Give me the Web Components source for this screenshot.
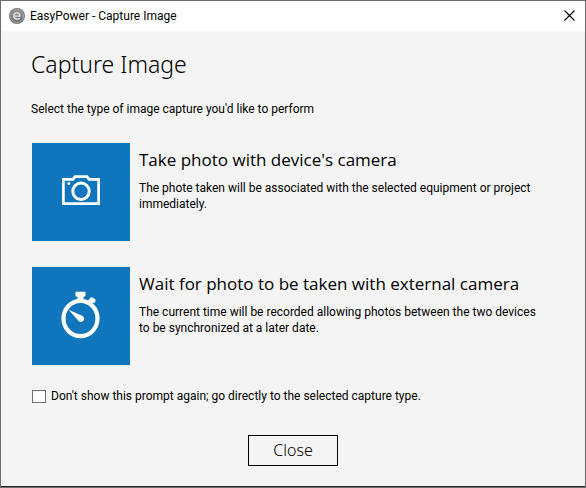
<!DOCTYPE html>
<html lang="en"><head><meta charset="utf-8"><title>EasyPower - Capture Image</title>
<style>
html,body{height:100%;margin:0}
body{font:12px/16px Roboto,"Liberation Sans",sans-serif;color:#000;background:#f4f4f4}
</style></head><body>
<capture-dialog></capture-dialog>
<script>
const define=(name,html)=>customElements.define(name,class extends HTMLElement{
  constructor(){super();const t=document.createElement('template');t.innerHTML=html;
    this.attachShadow({mode:'open'}).append(t.content.cloneNode(true));}
});
define('title-bar',`<style>
:host{display:flex;align-items:center;height:30px;background:#fff;padding:0 10px 0 8px;gap:5px}
.t{flex:1;white-space:nowrap}
svg{display:block}
button{border:0;background:none;padding:0 0 2px;margin:0}
</style>
<svg width="16" height="16" viewBox="0 0 16 16" aria-hidden="true">
<defs><linearGradient id="g" x1="0" y1="0" x2="0" y2="1"><stop offset="0" stop-color="#929497"/><stop offset=".5" stop-color="#7c7e81"/><stop offset="1" stop-color="#68696c"/></linearGradient></defs>
<circle cx="8" cy="8" r="8" fill="#737578"/><circle cx="8" cy="8" r="6.5" fill="url(#g)" stroke="#a6a8aa" stroke-width="1"/>
<path d="M5.4 8.1H10.9C10.9 5.9 9.8 4.9 8 4.9C6 4.9 4.8 6.2 4.8 8.1C4.8 10.1 6 11.2 8 11.2C9.2 11.2 10.1 11 10.9 10.3" fill="none" stroke="#e9e9ea" stroke-width="1.4"/></svg>
<span class="t"><slot></slot></span>
<button type="button" aria-label="Close window"><svg width="11" height="11" viewBox="0 0 11 11"><path d="M.5 .5L10.5 10.5M10.5 .5L.5 10.5" stroke="#000" stroke-width="1.1"/></svg></button>`);
define('capture-option',`<style>
:host{display:flex;gap:9px;align-items:flex-start}
button{flex:none;width:98px;height:98px;border:0;padding:0;background:#0f75bd;color:#fff;display:grid;place-items:center}
h2{font:400 17px/24px "Open Sans","Noto Sans",sans-serif;margin:5px 0 8px;white-space:nowrap}
p{margin:0;padding-right:12px}
</style>
<button type="button" aria-labelledby="h"><slot name="icon"></slot></button>
<div><h2 id="h"><slot name="heading"></slot></h2><p><slot></slot></p></div>`);
define('camera-icon',`<style>:host,svg{display:block}</style>
<svg width="38" height="34" viewBox="0 0 38 34" fill="none" stroke="#fff"><path d="M1.4 4.4H11L13 1.6H25L27 4.4H36.6V28.6H1.4Z" stroke-width="2.7"/><circle cx="19" cy="16.3" r="8.2" stroke-width="3"/><circle cx="6.8" cy="8.5" r="1.5" fill="#fff" stroke="none"/></svg>`);
define('stopwatch-icon',`<style>:host,svg{display:block}</style>
<svg width="40" height="50" viewBox="0 0 40 50" fill="#fff"><ellipse cx="19.5" cy="27.5" rx="17" ry="17.7" fill="none" stroke="#fff" stroke-width="4.2"/><path d="M15 .8Q14.5 .8 14.5 1.4V4.4Q14.5 5.2 15.4 5.4L16.5 6V11H22.5V6L23.6 5.4Q24.5 5.2 24.5 4.4V1.4Q24.5 .8 24 .8Z"/><path d="M26.3 10.8L29.5 6.6L31 6.3L34.5 8.6V10.3L33.5 11.8L31.6 12L29.7 14.4Z"/><path d="M7.5 18.8L21.2 24.8A3.2 3.2 0 1 1 17.2 29.4Z"/></svg>`);
define('check-option',`<style>
:host{display:block}
label{display:inline-flex;align-items:center;gap:5px;white-space:nowrap}
input{appearance:none;box-sizing:border-box;width:14px;height:13px;margin:0;border:1px solid #707070;background:#fff}
input:checked{background:#0f75bd}
</style><label><input type="checkbox"><slot></slot></label>`);
define('dialog-button',`<style>
:host{display:block}
button{font:300 16px/22px "Noto Sans","Open Sans",sans-serif;color:#000;width:90px;padding:3px 0 4px;border:1px solid #000;background:transparent;display:block}
</style><button type="button"><slot></slot></button>`);
define('capture-dialog',`<style>
:host{display:flex;flex-direction:column;box-sizing:border-box;min-height:100%;border:1px solid #6d6d6d;background:#f4f4f4}
main{flex:1;padding:16px 30px 18px;border-bottom:1px solid #222;display:flex;flex-direction:column}
h1{font:300 23px/34px "Noto Sans","Open Sans",sans-serif;margin:0 0 20px}
p{margin:0 0 26px}
section{display:grid;gap:26px;padding-left:1px;margin-bottom:23px}
check-option{padding-left:1px;margin-bottom:31px;display:flex}
dialog-button{align-self:center}
</style>
<title-bar>EasyPower - Capture Image</title-bar>
<main><h1>Capture Image</h1><p>Select the type of image capture you'd like to perform</p>
<section>
<capture-option><camera-icon slot="icon"></camera-icon><span slot="heading">Take photo with device's camera</span>The phote taken will be associated with the selected equipment or project immediately.</capture-option>
<capture-option><stopwatch-icon slot="icon"></stopwatch-icon><span slot="heading">Wait for photo to be taken with external camera</span>The current time will be recorded allowing photos between the two devices to be synchronized at a later date.</capture-option>
</section>
<check-option>Don't show this prompt again; go directly to the selected capture type.</check-option>
<dialog-button>Close</dialog-button></main>`);
</script></body></html>
